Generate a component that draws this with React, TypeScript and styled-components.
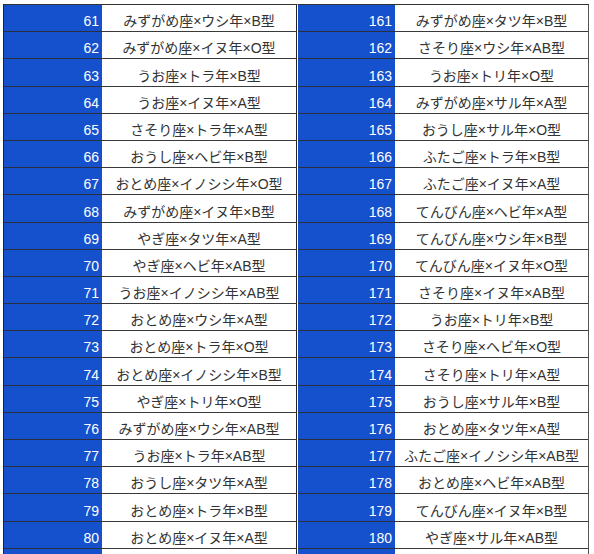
import { Fragment } from "react";
import styled, { createGlobalStyle } from "styled-components";

const GlobalStyle = createGlobalStyle`
    html, body {
        margin: 0;
        padding: 0;
        background: #ffffff;
        overflow: hidden;
    }
`;

type Entry = { rank: number; label: string };

const leftRows: Entry[] = [
    { rank: 61, label: "みずがめ座×ウシ年×B型" },
    { rank: 62, label: "みずがめ座×イヌ年×O型" },
    { rank: 63, label: "うお座×トラ年×B型" },
    { rank: 64, label: "うお座×イヌ年×A型" },
    { rank: 65, label: "さそり座×トラ年×A型" },
    { rank: 66, label: "おうし座×ヘビ年×B型" },
    { rank: 67, label: "おとめ座×イノシシ年×O型" },
    { rank: 68, label: "みずがめ座×イヌ年×B型" },
    { rank: 69, label: "やぎ座×タツ年×A型" },
    { rank: 70, label: "やぎ座×ヘビ年×AB型" },
    { rank: 71, label: "うお座×イノシシ年×AB型" },
    { rank: 72, label: "おとめ座×ウシ年×A型" },
    { rank: 73, label: "おとめ座×トラ年×O型" },
    { rank: 74, label: "おとめ座×イノシシ年×B型" },
    { rank: 75, label: "やぎ座×トリ年×O型" },
    { rank: 76, label: "みずがめ座×ウシ年×AB型" },
    { rank: 77, label: "うお座×トラ年×AB型" },
    { rank: 78, label: "おうし座×タツ年×A型" },
    { rank: 79, label: "おとめ座×トラ年×B型" },
    { rank: 80, label: "おとめ座×イヌ年×A型" }
];

const rightRows: Entry[] = [
    { rank: 161, label: "みずがめ座×タツ年×B型" },
    { rank: 162, label: "さそり座×ウシ年×AB型" },
    { rank: 163, label: "うお座×トリ年×O型" },
    { rank: 164, label: "みずがめ座×サル年×A型" },
    { rank: 165, label: "おうし座×サル年×O型" },
    { rank: 166, label: "ふたご座×トラ年×B型" },
    { rank: 167, label: "ふたご座×イヌ年×A型" },
    { rank: 168, label: "てんびん座×ヘビ年×A型" },
    { rank: 169, label: "てんびん座×ウシ年×B型" },
    { rank: 170, label: "てんびん座×イヌ年×O型" },
    { rank: 171, label: "さそり座×イヌ年×AB型" },
    { rank: 172, label: "うお座×トリ年×B型" },
    { rank: 173, label: "さそり座×ヘビ年×O型" },
    { rank: 174, label: "さそり座×トリ年×A型" },
    { rank: 175, label: "おうし座×サル年×B型" },
    { rank: 176, label: "おとめ座×タツ年×A型" },
    { rank: 177, label: "ふたご座×イノシシ年×AB型" },
    { rank: 178, label: "おとめ座×ヘビ年×AB型" },
    { rank: 179, label: "てんびん座×イヌ年×B型" },
    { rank: 180, label: "やぎ座×サル年×AB型" }
];

const Page = styled.div`
    display: flex;
    align-items: flex-start;
    padding: 4px 0 0 3px;
    font-family: "Liberation Sans", "Noto Sans CJK JP", sans-serif;
`;

const Table = styled.div<{ $rankWidth: number; $labelWidth: number; $edge: string }>`
    display: grid;
    grid-template-columns: ${(p) => p.$rankWidth}px ${(p) => p.$labelWidth}px;
    grid-auto-rows: 27.2px;
    border-top: 1px solid #333;
    border-left: 1px solid ${(p) => p.$edge};
`;

const Rank = styled.div`
    display: flex;
    align-items: flex-end;
    justify-content: flex-end;
    box-sizing: border-box;
    padding: 0 3px 2px 0;
    background: #1651cd;
    border-bottom: 1px solid #2a2f40;
    color: #ffffff;
    font-size: 14px;
    line-height: 16px;
`;

const Label = styled.div<{ $edge: string }>`
    display: flex;
    align-items: flex-end;
    justify-content: center;
    box-sizing: border-box;
    padding-bottom: 2px;
    background: #ffffff;
    border-bottom: 1px solid #3a3a3a;
    border-right: 1px solid ${(p) => p.$edge};
    color: #333333;
    font-size: 14px;
    line-height: 16px;
    white-space: nowrap;
`;

type RankTableProps = {
    rows: Entry[];
    rankWidth: number;
    labelWidth: number;
    leftEdge: string;
    rightEdge: string;
};

const RankTable = ({ rows, rankWidth, labelWidth, leftEdge, rightEdge }: RankTableProps) => (
    <Table $rankWidth={rankWidth} $labelWidth={labelWidth} $edge={leftEdge}>
        {rows.map((row) => (
            <Fragment key={row.rank}>
                <Rank>{row.rank}</Rank>
                <Label $edge={rightEdge}>{row.label}</Label>
            </Fragment>
        ))}
        {/* next row, cut off by the bottom of the window */}
        <Rank />
        <Label $edge={rightEdge} />
    </Table>
);

export default function App() {
    return (
        <>
            <GlobalStyle />
            <Page>
                <RankTable rows={leftRows} rankWidth={98} labelWidth={195} leftEdge="#222" rightEdge="#222" />
                <RankTable rows={rightRows} rankWidth={97} labelWidth={194} leftEdge="transparent" rightEdge="#555" />
            </Page>
        </>
    );
}
